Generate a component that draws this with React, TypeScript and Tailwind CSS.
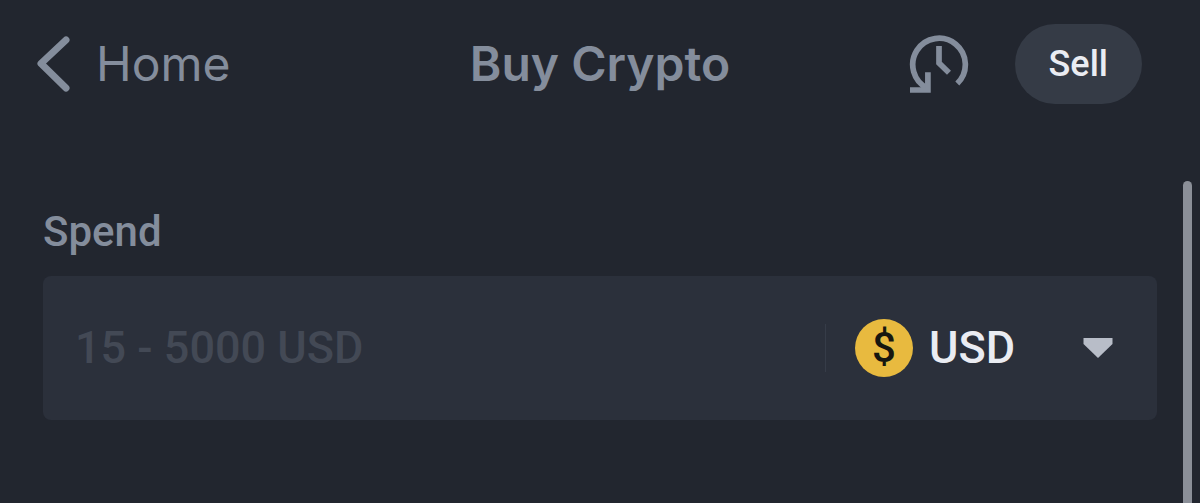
import React, { useState } from "react";

const CURRENCIES = ["USD", "EUR", "GBP"];

const BackIcon = () => (
  <svg width="40" height="64" viewBox="0 0 40 64" fill="none" aria-hidden="true">
    <path
      d="M34 8 9 31.5 34 56"
      stroke="currentColor"
      strokeWidth="7"
      strokeLinecap="round"
      strokeLinejoin="round"
    />
  </svg>
);

const HistoryIcon = () => (
  <svg width="64" height="64" viewBox="0 0 64 64" fill="none" aria-hidden="true">
    <g stroke="currentColor" strokeWidth="5.7">
      <path d="M19.5 56.2A26.3 26.3 0 1 1 49.3 51.5" />
      <path d="M2 58H19.9V40.3" />
      <path d="M31 14V31L41 40.8" />
    </g>
  </svg>
);

const CoinIcon = () => (
  <span className="flex size-[58px] shrink-0 items-center justify-center rounded-full bg-[#e8ba3f] text-[42px] leading-none font-medium text-[#17170f]">
    $
  </span>
);

const CaretIcon = () => (
  <svg
    width="30"
    height="20"
    viewBox="0 0 30 20"
    className="pointer-events-none col-start-1 row-start-1 justify-self-end text-[#b8bdc8]"
    aria-hidden="true"
  >
    <path d="M0.5 0H29.5V6L15 20L0.5 6Z" fill="currentColor" />
  </svg>
);

export default function App() {
  const [amount, setAmount] = useState("");
  const [currency, setCurrency] = useState("USD");

  return (
    <div className="relative min-h-screen bg-[#22262f] font-['Roboto',sans-serif] text-[#848d9c]">
      {/* Header */}
      <header className="grid h-32 grid-cols-[1fr_auto_1fr] items-center pr-[58px] pl-8 font-['Inter',sans-serif] text-[48px] leading-none">
        <a href="#home" className="flex items-center gap-6 justify-self-start">
          <BackIcon />
          <span>Home</span>
        </a>
        <h1 className="pl-[26px] font-semibold">Buy Crypto</h1>
        <div className="flex items-center gap-[43px] justify-self-end">
          <button type="button" aria-label="Order history">
            <HistoryIcon />
          </button>
          <button
            type="button"
            className="h-20 rounded-full bg-[#353b46] px-[34px] font-['Roboto',sans-serif] text-[36px] font-medium text-[#eaecf2]"
          >
            Sell
          </button>
        </div>
      </header>

      {/* Spend form */}
      <main className="px-[43px] pt-20">
        <label htmlFor="amount" className="block text-[42px] leading-12 font-medium">
          Spend
        </label>
        <div className="mt-5 flex h-36 items-center rounded-lg bg-[#2b303b] pr-11 pl-8 text-[45px] font-medium">
          <input
            id="amount"
            type="text"
            inputMode="decimal"
            value={amount}
            onChange={(e) => setAmount(e.target.value)}
            placeholder="15 - 5000 USD"
            className="min-w-0 flex-1 bg-transparent text-[#eaecf2] outline-none placeholder:text-[#434955]"
          />
          <div className="flex items-center">
            <span className="mr-[29px] h-12 w-px bg-[#363c48]" />
            <CoinIcon />
            <div className="ml-4 grid w-[184px] items-center">
              <select
                aria-label="Currency"
                value={currency}
                onChange={(e) => setCurrency(e.target.value)}
                className="col-start-1 row-start-1 w-full appearance-none bg-transparent text-[#eaecf2] outline-none"
              >
                {CURRENCIES.map((c) => (
                  <option key={c} value={c}>
                    {c}
                  </option>
                ))}
              </select>
              <CaretIcon />
            </div>
          </div>
        </div>
      </main>

      {/* Scroll indicator */}
      <div className="absolute top-[181px] right-2 bottom-0 w-[9px] rounded-t-full bg-[#8b8f98]" />
    </div>
  );
}
